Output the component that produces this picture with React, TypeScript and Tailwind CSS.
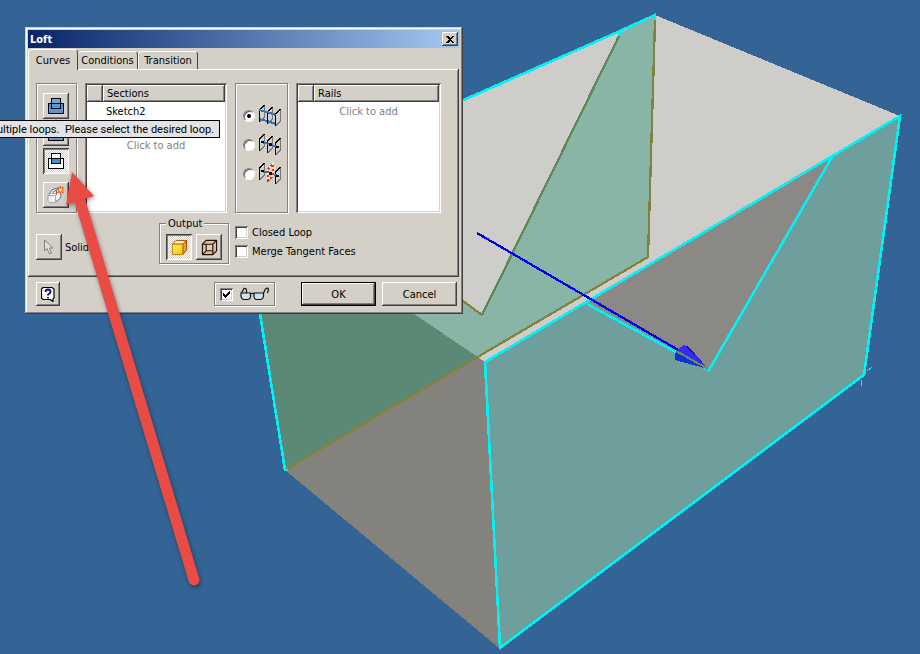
import React from "react";

const raised =
  "bg-[#d4d0c8] shadow-[inset_-1px_-1px_0_#404040,inset_1px_1px_0_#fff,inset_-2px_-2px_0_#808080]";
const pressed =
  "bg-[repeating-conic-gradient(#fff_0_25%,#d4d0c8_0_50%)] bg-[length:2px_2px] shadow-[inset_1px_1px_0_#404040,inset_-1px_-1px_0_#fff,inset_2px_2px_0_#808080]";
const sunken =
  "bg-white shadow-[inset_1px_1px_0_#808080,inset_-1px_-1px_0_#fff,inset_2px_2px_0_#404040,inset_-2px_-2px_0_#d4d0c8]";
const etched =
  "border border-[#808080] shadow-[inset_1px_1px_0_#fff,1px_1px_0_#fff]";

function Scene() {
  return (
    <svg
      className="absolute inset-0 h-full w-full"
      viewBox="0 0 920 654"
      preserveAspectRatio="xMinYMin slice"
      fill="none"
      shapeRendering="crispEdges"
      aria-hidden="true"
    >
      {/* solid body */}
      <path d="M485 362 499 648 285 470 260 314 250 195 410 312z" fill="#84827d" />
      <path d="M655 15 900 116 485 362 410 312 250 205V194z" fill="#cfcdca" />
      {/* section plane */}
      <path d="M478 357 285 470 260 314 250 205 411 312z" fill="#5b8975" />
      <path d="M655 15 648 257 478 357 411 312 380 290 400 260 463 301 482 315 620 33z" fill="#89b5a7" />
      {/* front face with its notch */}
      <path d="M485 362 900 116 864 375 499 648z" fill="#6f9f9c" />
      <path d="M589 302 832 157 709 370z" fill="#8b8985" />

      <g strokeWidth="2.3">
        <path d="M655 20 648 257 285 470M463 301 482 315" stroke="#82823f" />
        <path d="M620 34 482 315" stroke="#5f8858" />
        <g stroke="#00f2f2" strokeWidth="2.6">
          <path d="M400 128 620 31 655 15V20M619 36 621 30" />
          <path d="M255 284 260 314 285 470H288" />
          <path d="M485 362 500 648 864 375 900 116z" />
          <path d="M587 304 709 370 832 157" />
        </g>
        <path d="M867 371 872 367M861 380V386" stroke="#00f2f2" strokeWidth="1" />
        <path d="M477 233 680 351" stroke="#0000ee" />
      </g>

      <path d="M677 351 675 354V360L708 369z" fill="#0b35dc" />
      <path d="M677 350 684 345 689 347 708 369z" fill="#302df6" />
      <path d="M684 345 689 347 708 369z" fill="#0d09ca" />
      <path d="M676 351 708 369" stroke="#788a50" strokeWidth="2" />
    </svg>
  );
}

function Pointer() {
  return (
    <svg
      className="pointer-events-none absolute inset-0 h-full w-full drop-shadow-[1px_2px_2px_rgba(0,0,0,0.4)]"
      viewBox="0 0 920 654"
      preserveAspectRatio="xMinYMin slice"
      aria-hidden="true"
    >
      <path d="M80 201 194 580" stroke="#e94b45" strokeWidth="11" strokeLinecap="round" />
      <path d="M72 172 94 196 66 205z" fill="#e94b45" />
    </svg>
  );
}

function LoopIcon({ only }: { only?: boolean }) {
  return (
    <svg width="16" height="16" viewBox="0 0 16 16" shapeRendering="crispEdges">
      <rect x="3.5" y="0.5" width="9" height="10" fill={only ? "#fff" : "#6aa4dc"} />
      <rect x="0.5" y="5.5" width="15" height="10" fill={only ? "#fff" : "#5b98d3"} />
      {only && <rect x="3.5" y="5.5" width="9" height="5" fill="#4a8acb" />}
      <path d="M.5 5.5h15v10H.5zM3.5.5h9v10h-9z" fill="none" stroke="#000" />
    </svg>
  );
}

function SolidLoopIcon() {
  return (
    <svg width="18" height="18" viewBox="0 0 18 18">
      <path d="M2 8 5 4Q8 1.500 11 3L14 8V11L10 15.500z" fill="#eaf3fa" stroke="#3b79b8" />
      <path d="M6 7Q7 4 9.500 4.500V9" fill="none" stroke="#d23a2a" />
      <path d="M1 9.500 3.500 7.500H9.500L8.500 9.500z" fill="#fff" stroke="#888" strokeWidth="0.700" />
      <path d="M1 9.500H8.500V16.500H2.500L1 15z" fill="#eef0f4" stroke="#9a9aa2" strokeWidth="0.800" />
      <path d="M13.500 0V8M9.500 4H17.500M10.500 1 16.500 7M16.500 1 10.500 7" stroke="#e2461a" strokeWidth="1.100" />
      <circle cx="13.500" cy="4" r="1.800" fill="#ffe45a" />
    </svg>
  );
}

function RailIcon({ kind }: { kind: "rails" | "center" | "area" }) {
  return (
    <svg width="24" height="24" viewBox="0 0 24 24" fill="none" shapeRendering="crispEdges">
      <path d="M6.500 2V13L1.500 18M14.500 4V15L9.500 20M22.500 6V17L17.500 22" stroke="#777" />
      {kind === "area" ? (
        <path d="M1.500 18V6L6.500 1M17.500 22V10L22.500 5" stroke="#000" />
      ) : (
        <path d="M1.500 18V6L6.500 1M9.500 20V8L14.500 3M17.500 22V10L22.500 5" stroke="#000" />
      )}
      {kind === "rails" && (
        <>
          <path d="M1 6 9 8 18 11M1 15 9 17 18 20" stroke="#2f74b8" strokeWidth="2" />
          <path d="M1.500 17V7M9.500 18V9M17.500 22V11" stroke="#000" />
        </>
      )}
      {kind !== "rails" && (
        <>
          <path d="M4 9 20 14" stroke="#2f74b8" strokeWidth="2" />
          <path d="M3 8H6V10H3zM11 10H14V13H11zM18 13H21V15H18z" fill="#000" />
        </>
      )}
      {kind === "area" && (
        <>
          <path d="M9.500 19V8L14.500 2V14z" stroke="#f4e4c4" strokeWidth="2" />
          <path d="M9.500 19V8L14.500 2V14z" stroke="#e03a12" strokeWidth="2" strokeDasharray="2 2" />
        </>
      )}
    </svg>
  );
}

function SolidCube() {
  return (
    <svg width="17" height="17" viewBox="0 0 18 18" strokeLinejoin="round">
      <defs>
        <linearGradient id="gold" x1="0" y1="0" x2="1" y2="1">
          <stop offset="0" stopColor="#fff04a" />
          <stop offset="1" stopColor="#efc51c" />
        </linearGradient>
      </defs>
      <path d="M1.500 5.500 5.500 1.500H16.500L12.500 5.500z" fill="#fff6a8" stroke="#a03c08" />
      <path d="M12.500 5.500 16.500 1.500V11.500L12.500 16.500z" fill="#eaa21c" stroke="#a03c08" />
      <path d="M1.500 5.500H12.500V16.500H1.500z" fill="url(#gold)" stroke="#b87a0c" />
    </svg>
  );
}

function SurfaceCube() {
  return (
    <svg width="17" height="17" viewBox="0 0 18 18" strokeLinejoin="round">
      <path d="M1.500 5.500 5.500 1.500H16.500V12.500L12.500 16.500H1.500z" fill="#f6b48a" />
      <path d="M5.500 5.500H12.500V12.500H5.500z" fill="#d4d0c8" />
      <path
        d="M1.500 5.500 5.500 1.500H16.500V12.500L12.500 16.500H1.500zM1.500 5.500H12.500V16.500M12.500 5.500 16.500 1.500M5.500 5.500V12.500H12.500M5.500 12.500 1.500 16.500"
        fill="none"
        stroke="#1c120c"
        strokeWidth="1.200"
      />
    </svg>
  );
}

function GlassesIcon() {
  return (
    <svg width="30" height="14" viewBox="0 0 30 14" fill="none" stroke="#111" strokeWidth="1.200">
      <path d="M1 6H10.500V10Q10 12.500 7.500 12.500H4Q1.500 12.500 1 9z" fill="#cfe3e6" />
      <path d="M14 6H23.500V9Q23 12.500 20 12.500H17Q14.500 12.500 14 10z" fill="#cfe3e6" />
      <path d="M10.500 7Q12 5.500 14 7M1.500 6 4 1.500Q6.500 .5 6.500 4V6M23.500 6 25.500 2Q28 0 28.500 2.500L27.500 6" />
    </svg>
  );
}

function ListBox({ title, className, children }: { title: string; className: string; children: React.ReactNode }) {
  return (
    <div className={`${sunken} ${className} p-0.5`}>
      <div className="mb-px flex h-[17px]">
        <div className={`${raised} w-4`} />
        <div className={`${raised} flex-1 pl-1 leading-[17px]`}>{title}</div>
      </div>
      {children}
    </div>
  );
}

function CheckBox({ id, checked }: { id: string; checked?: boolean }) {
  return (
    <span className="grid">
      <input
        id={id}
        type="checkbox"
        defaultChecked={checked}
        aria-label={id}
        className={`${sunken} peer col-start-1 row-start-1 size-[13px] appearance-none`}
      />
      <svg
        className="pointer-events-none invisible col-start-1 row-start-1 peer-checked:visible"
        width="13"
        height="13"
        viewBox="0 0 13 13"
        shapeRendering="crispEdges"
      >
        <path d="M3 5V8L5 10 10 5V2L5 7z" fill="#000" />
      </svg>
    </span>
  );
}

export default function App() {
  const loops = [
    { name: "Add loop", icon: <LoopIcon />, state: raised, gap: "" },
    { name: "Remove loop", icon: <LoopIcon />, state: raised, gap: "mt-px" },
    { name: "Select loop", icon: <LoopIcon only />, state: pressed, gap: "mt-0.5" },
    { name: "Solid loop", icon: <SolidLoopIcon />, state: raised, gap: "mt-2" },
  ];
  const modes: ("rails" | "center" | "area")[] = ["rails", "center", "area"];

  return (
    <main className="relative min-h-screen overflow-hidden bg-[#336495] pt-[27px] pl-[25px] font-['DejaVu_Sans_Condensed','DejaVu_Sans',sans-serif] text-[11px] leading-[13px] text-black">
      <Scene />

      <section
        role="dialog"
        aria-label="Loft"
        className="relative w-[438px] max-w-full bg-[#d4d0c8] p-[3px] pb-2 shadow-[inset_-1px_-1px_0_#404040,inset_1px_1px_0_#d4d0c8,inset_-2px_-2px_0_#808080,inset_2px_2px_0_#fff]"
      >
        <header className="flex h-[18px] items-center justify-between bg-linear-to-r from-[#0a246a] to-[#a6caf0] px-0.5">
          <h1 className="font-bold text-white">Loft</h1>
          <button aria-label="Close" className={`${raised} flex h-[14px] w-4 items-center justify-center`}>
            <svg width="8" height="7" viewBox="0 0 8 7" shapeRendering="crispEdges">
              <path d="M0 0H2L4 2 6 0H8L5 3.500 8 7H6L4 5 2 7H0L3 3.500z" fill="#000" />
            </svg>
          </button>
        </header>

        <nav className="mt-px flex h-5 items-end">
          <button className="relative z-10 -mb-px h-[21px] w-[50px] rounded-t-sm border-t border-l border-r border-t-white border-r-[#404040] border-l-white bg-[#d4d0c8]">
            Curves
          </button>
          <button className="h-[18px] w-[60px] rounded-t-sm border-t border-r border-t-white border-r-[#404040]">
            Conditions
          </button>
          <button className="h-[18px] w-[60px] rounded-t-sm border-t border-r border-l border-t-white border-r-[#404040] border-l-white">
            Transition
          </button>
        </nav>

        <div className={`${raised} mr-px px-2 pt-[14px] pb-[13px]`}>
          <div className="flex gap-2 pr-[10px]">
            <div className={`${etched} flex w-[41px] flex-col items-start pt-[9px] pb-1 pl-1.5`}>
              {loops.map((l) => (
                <button key={l.name} aria-label={l.name} className={`${l.state} ${l.gap} flex size-[26px] items-center justify-center`}>
                  {l.icon}
                </button>
              ))}
            </div>

            <ListBox title="Sections" className="w-[142px]">
              <p className="pl-[19px] leading-[17px]">Sketch2</p>
              <p className="mt-[17px] text-center leading-[17px] text-[#808080]">Click to add</p>
            </ListBox>

            <div className={`${etched} flex w-[53px] flex-col items-end gap-[5px] pt-5 pr-[5px]`}>
              {modes.map((m) => (
                <label key={m} className="flex items-center gap-[3px]">
                  <input
                    type="radio"
                    name="mode"
                    aria-label={m}
                    defaultChecked={m === "rails"}
                    className="flex size-3 appearance-none items-center justify-center rounded-full border border-t-[#808080] border-r-white border-b-white border-l-[#808080] bg-white shadow-[inset_1px_1px_0_#606060] checked:before:size-1 checked:before:rounded-full checked:before:bg-black"
                  />
                  <RailIcon kind={m} />
                </label>
              ))}
            </div>

            <ListBox title="Rails" className="flex-1">
              <p className="text-center leading-[17px] text-[#808080]">Click to add</p>
            </ListBox>
          </div>

          <div className="mt-1 flex items-end">
            <div className="mb-1 flex w-[123px] items-center gap-[3px]">
              <button aria-label="Select solids" className={`${raised} flex size-[26px] items-center justify-center`}>
                <svg width="12" height="16" viewBox="0 0 12 16">
                  <path d="M1.500 1V12L4 9.500 6.500 15 8.500 14 6.500 9H10z" fill="#e4e1dc" stroke="#808080" />
                </svg>
              </button>
              <span>Solids</span>
            </div>

            <fieldset className={`${etched} flex w-[68px] gap-1 px-1.5 pt-1 pb-[3px]`}>
              <legend className="bg-[#d4d0c8] px-0.5">Output</legend>
              <button aria-label="Solid" className={`${pressed} flex size-[26px] items-center justify-center`}>
                <SolidCube />
              </button>
              <button aria-label="Surface" className={`${raised} flex size-[26px] items-center justify-center`}>
                <SurfaceCube />
              </button>
            </fieldset>

            <div className="mb-1.5 ml-1.5 flex flex-col gap-1.5">
              <label className="flex items-center gap-1">
                <CheckBox id="Closed Loop" />
                Closed Loop
              </label>
              <label className="flex items-center gap-1">
                <CheckBox id="Merge Tangent Faces" />
                Merge Tangent Faces
              </label>
            </div>
          </div>
        </div>

        <footer className="mt-[5px] flex items-center pr-[3px] pl-2">
          <button aria-label="Help" className={`${raised} flex size-6 items-center justify-center`}>
            <svg width="14" height="15" viewBox="0 0 14 15">
              <path d="M2 .5H11L13 2V11L12 12V14.500L9 12.500H2L.5 11V2z" fill="#fff" stroke="#000" strokeWidth="1.200" />
              <path d="M4.500 5Q4.500 2.500 7 2.500T9.500 5Q9.500 6.500 7 7.500V8.500M7 10V11.500" fill="none" stroke="#0a0a8c" strokeWidth="1.800" />
            </svg>
          </button>
          <div className={`${etched} ml-auto flex h-6 w-[61px] items-center gap-[7px] pl-[5px]`}>
            <CheckBox id="Preview" checked />
            <GlassesIcon />
          </div>
          <button className={`${raised} ml-[26px] h-6 w-[75px] border border-black outline-1 -outline-offset-1 outline-black`}>
            OK
          </button>
          <button className={`${raised} ml-1.5 h-6 w-[75px]`}>Cancel</button>
        </footer>
      </section>

      <div
        role="tooltip"
        className="absolute top-[120px] left-0 flex h-[18px] w-[220px] items-center justify-end overflow-hidden border border-l-0 border-black bg-[#e3e3e5] pr-[5px] font-[Roboto,sans-serif] whitespace-pre"
      >
        multiple loops.{"  "}Please select the desired loop.
      </div>

      <Pointer />
    </main>
  );
}
